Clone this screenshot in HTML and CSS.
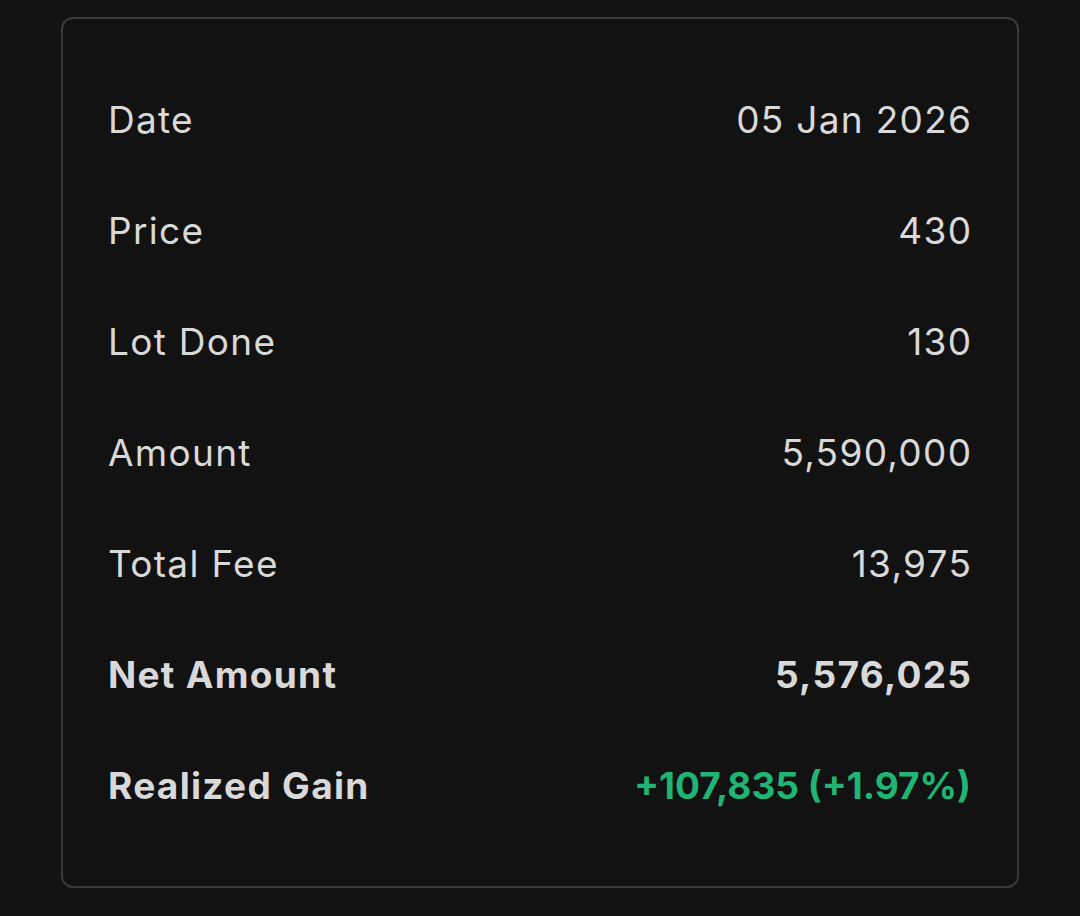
FILE: index.html
```html
<!DOCTYPE html>
<html lang="en">
<head>
    <meta charset="UTF-8">
    <meta name="viewport" content="width=device-width, initial-scale=1.0">
    <title>Trade Detail</title>
    <link rel="stylesheet" href="styles.css">
</head>
<body>
    <div class="card">
        <div class="row"><span class="label">Date</span><span class="value">05 Jan 2026</span></div>
        <div class="row"><span class="label">Price</span><span class="value">430</span></div>
        <div class="row"><span class="label">Lot Done</span><span class="value">130</span></div>
        <div class="row"><span class="label">Amount</span><span class="value">5,590,000</span></div>
        <div class="row"><span class="label">Total Fee</span><span class="value">13,975</span></div>
        <div class="row bold"><span class="label">Net Amount</span><span class="value">5,576,025</span></div>
        <div class="row bold"><span class="label">Realized Gain</span><span class="value gain">+107,835 (+1.97%)</span></div>
    </div>
</body>
</html>
```

FILE: styles.css
```css
* {
    margin: 0;
    padding: 0;
    box-sizing: border-box;
}

body {
    background: #131313;
    color: #d9d9d9;
    font-family: 'Inter', 'Noto Sans', sans-serif;
    padding: 17px 61px;
}

.card {
    border: 2px solid #3a3a3a;
    border-radius: 12px;
    background: #121212;
    padding: 45px 46px 45px 45px;
    display: flex;
    flex-direction: column;
}

.row {
    height: 111px;
    display: flex;
    justify-content: space-between;
    align-items: center;
    font-size: 37px;
    font-weight: 400;
    letter-spacing: 1.3px;
}

.row .value {
    margin-right: -1.3px;
}

.row.bold {
    font-weight: 700;
}

.row .gain {
    color: #1fb574;
    letter-spacing: 0;
    margin-right: 0;
}
```
